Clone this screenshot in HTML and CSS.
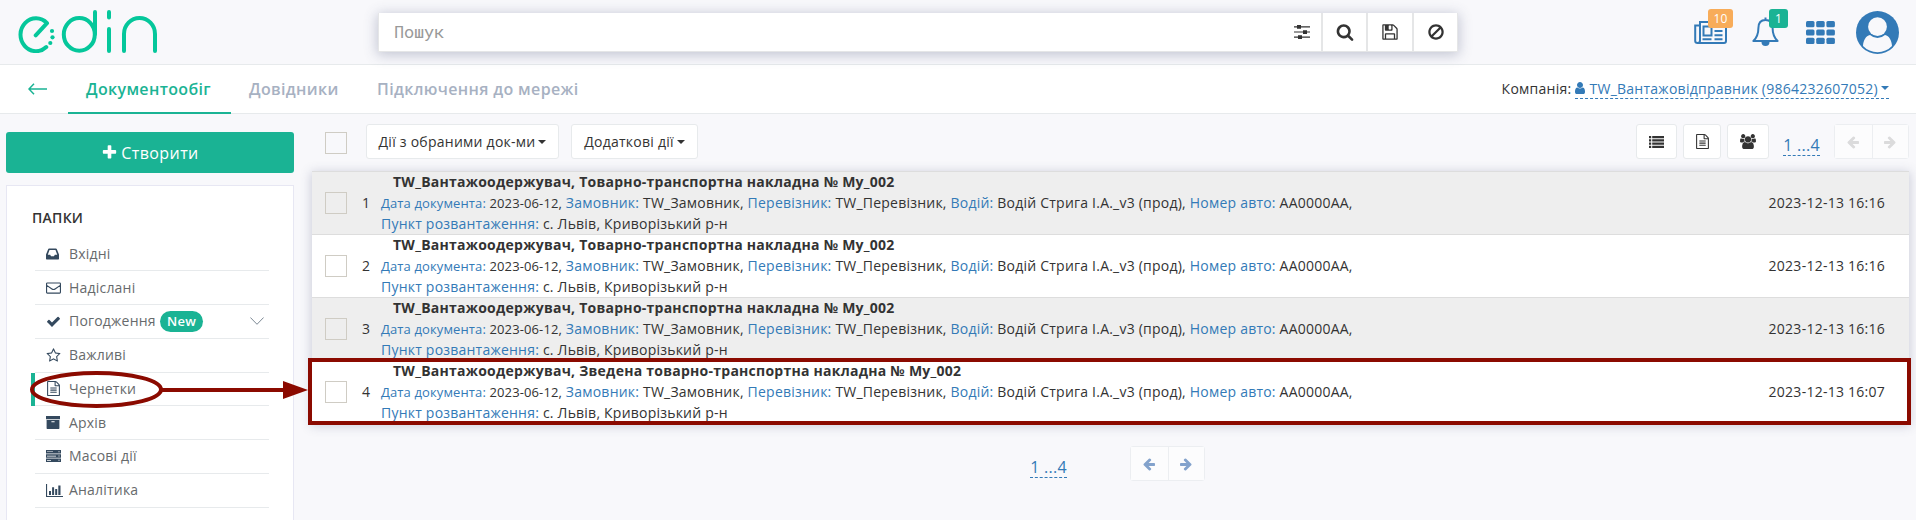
FILE: index.html
```html
<!DOCTYPE html>
<html lang="uk">
<head>
<meta charset="utf-8">
<title>edin</title>
<link rel="stylesheet" href="styles.css">
</head>
<body>
<svg class="sprite" aria-hidden="true">
  <symbol id="search" viewBox="0 0 1792 1792"><path d="M1216 832q0-185-131.500-316.500t-316.500-131.500-316.500 131.500-131.500 316.500 131.500 316.500 316.500 131.500 316.500-131.500 131.500-316.500zm512 832q0 52-38 90t-90 38q-54 0-90-38l-343-342q-179 124-399 124-143 0-273.500-55.500t-225-150-150-225-55.500-273.500 55.500-273.500 150-225 225-150 273.500-55.500 273.500 55.500 225 150 150 225 55.500 273.500q0 220-124 399l343 343q37 37 37 90z"/></symbol>
  <symbol id="ban" viewBox="0 0 1792 1792"><path d="M1440 893q0-161-87-295l-754 753q137 89 297 89 111 0 211.500-43.500t173.500-116.500 116-174.500 43-212.500zm-999 299l755-754q-135-91-300-91-148 0-273 73t-198 199-73 274q0 162 89 299zm1223-299q0 157-61 300t-163.500 246-245 164-298.500 61-298.500-61-245-164-163.500-246-61-300 61-299.500 163.500-245.500 245-164 298.500-61 298.500 61 245 164 163.500 245.500 61 299.500z"/></symbol>
  <symbol id="floppy" viewBox="0 0 1792 1792"><path d="M512 1536h768v-384h-768v384zm896 0h128v-896q0-14-10-38.500t-20-34.500l-281-281q-10-10-34-20t-39-10v416q0 40-28 68t-68 28h-576q-40 0-68-28t-28-68v-416h-128v1280h128v-416q0-40 28-68t68-28h832q40 0 68 28t28 68v416zm-384-928v-320q0-13-9.500-22.500t-22.500-9.500h-192q-13 0-22.500 9.500t-9.500 22.500v320q0 13 9.500 22.500t22.500 9.500h192q13 0 22.500-9.500t9.500-22.500zm640 32v928q0 40-28 68t-68 28h-1344q-40 0-68-28t-28-68v-1344q0-40 28-68t68-28h928q40 0 88 20t76 48l280 280q28 28 48 76t20 88z"/></symbol>
  <symbol id="user" viewBox="0 0 1792 1792"><path d="M1536 1399q0 109-62.500 187t-150.500 78h-854q-88 0-150.500-78t-62.500-187q0-85 8.500-160.500t31.500-152 58.500-131 94-89 134.500-34.500q131 128 313 128t313-128q76 0 134.500 34.500t94 89 58.500 131 31.500 152 8.500 160.500zm-256-887q0 159-112.500 271.500t-271.500 112.500-271.500-112.500-112.500-271.500 112.500-271.500 271.500-112.500 271.500 112.500 112.500 271.500z"/></symbol>
  <symbol id="plus" viewBox="0 0 1792 1792"><path d="M1600 736v192q0 40-28 68t-68 28h-416v416q0 40-28 68t-68 28h-192q-40 0-68-28t-28-68v-416h-416q-40 0-68-28t-28-68v-192q0-40 28-68t68-28h416v-416q0-40 28-68t68-28h192q40 0 68 28t28 68v416h416q40 0 68 28t28 68z"/></symbol>
  <symbol id="arrow" viewBox="0 0 1792 1792"><path d="M1664 896v128q0 53-32.500 90.500t-84.500 37.500h-704l293 294q38 36 38 90t-38 90l-75 76q-37 37-90 37-52 0-91-37l-651-652q-37-37-37-90 0-52 37-91l651-650q38-38 91-38 52 0 90 38l75 74q38 38 38 91t-38 91l-293 293h704q52 0 84.500 37.500t32.500 90.500z"/></symbol>
  <symbol id="star" viewBox="0 0 1792 1792"><path d="M1201 1004l306-297-422-62-189-382-189 382-422 62 306 297-73 421 378-199 377 199zm527-357q0 22-26 48l-363 354 86 500q1 7 1 20 0 50-41 50-19 0-40-12l-449-236-449 236q-22 12-40 12-21 0-31.500-14.500t-10.500-35.500q0-6 2-20l86-500-364-354q-25-27-25-48 0-37 56-46l502-73 225-455q19-41 49-41t49 41l225 455 502 73q56 9 56 46z"/></symbol>
  <symbol id="check" viewBox="0 0 1792 1792"><path d="M1671 566q0 40-28 68l-724 724-136 136q-28 28-68 28t-68-28l-136-136-362-362q-28-28-28-68t28-68l136-136q28-28 68-28t68 28l294 295 656-657q28-28 68-28t68 28l136 136q28 28 28 68z"/></symbol>
  <symbol id="file" viewBox="0 0 1792 1792"><path d="M1596 380q28 28 48 76t20 88v1152q0 40-28 68t-68 28h-1344q-40 0-68-28t-28-68v-1600q0-40 28-68t68-28h896q40 0 88 20t76 48zm-444-244v376h376q-10-29-22-41l-313-313q-12-12-41-22zm384 1528v-1024h-416q-40 0-68-28t-28-68v-416h-768v1536h1280zm-1024-864q0-14 9-23t23-9h704q14 0 23 9t9 23v64q0 14-9 23t-23 9h-704q-14 0-23-9t-9-23v-64zm736 224q14 0 23 9t9 23v64q0 14-9 23t-23 9h-704q-14 0-23-9t-9-23v-64q0-14 9-23t23-9h704zm0 256q14 0 23 9t9 23v64q0 14-9 23t-23 9h-704q-14 0-23-9t-9-23v-64q0-14 9-23t23-9h704z"/></symbol>
  <symbol id="sliders" viewBox="0 0 16 14"><path d="M0 1.200h16v1.200H0zM0 6.400h16v1.200H0zM0 11.600h16v1.200H0zM3 0h4v3.700H3zM9 5.200h4V9H9zM4 10.300h4V14H4z"/></symbol>
  <symbol id="inbox" viewBox="0 0 14 12"><path fill-rule="evenodd" d="M3.200 0h7.600q.5 0 .8.500L14 6.500v4.700q0 .8-.7.800H.7q-.7 0-.7-.8V6.500L2.400.5q.3-.5.800-.5zM3.800 1.800L1.900 6.700h2.600l.9 1.800h3.200l.9-1.800h2.600l-1.900-4.900z"/></symbol>
  <symbol id="envelope" viewBox="0 0 16 12"><path d="M.6 1.400q0-.8.800-.8h13.200q.8 0 .8.800v9.200q0 .8-.8.800H1.400q-.8 0-.8-.8zM.8 3.200L6.300 7q1.700 1.300 3.400 0l5.500-3.800" fill="none" stroke="currentColor" stroke-width="1.200"/></symbol>
  <symbol id="archive" viewBox="0 0 14 13"><path fill-rule="evenodd" d="M0 0h14v3.200H0zM.6 4h12.800v8.300q0 .7-.6.700H1.200q-.6 0-.6-.7zM5.400 5.200v1.100h3.200V5.200z"/></symbol>
  <symbol id="server" viewBox="0 0 15 12"><path fill-rule="evenodd" d="M0 0h15v3.400H0zM0 4.300h15v3.400H0zM0 8.600h15V12H0zM1 1.400v.7h6v-.7zM1 5.700v.7h9v-.7zM1 10v.7h4V10zM12.500 1.200v1h1v-1zM12.500 5.500v1h1v-1zM12.500 9.800v1h1v-1z"/></symbol>
  <symbol id="chart" viewBox="0 0 17 13"><path d="M0 0h1.100v11.900H17V13H0zM3 7h2v4H3zM6.100 3.200h2V11h-2zM9.200 5h2v6h-2zM12.300 1.500h2.200V11h-2.200z"/></symbol>
  <symbol id="list" viewBox="0 0 15 12"><path d="M0 0h2.200v2.200H0zM3.200 0H15v2.200H3.200zM0 3.250h2.200v2.200H0zM3.200 3.250H15v2.200H3.200zM0 6.500h2.200v2.200H0zM3.200 6.500H15v2.200H3.200zM0 9.750h2.200V12H0zM3.200 9.750H15V12H3.200z"/></symbol>
  <symbol id="users" viewBox="0 0 1920 1792"><path d="M593 896q-162 5-265 128h-134q-82 0-138-40.500t-56-118.500q0-353 124-353 6 0 43.500 21t97.500 42.500 119 21.500q67 0 133-23-5 37-5 66 0 159 81 256zm1071 637q0 120-73 189.500t-194 69.500h-874q-121 0-194-69.500t-73-189.500q0-53 3.500-103.500t14-109 26.500-108.500 43-97.500 62-81 85.500-53.500 111.500-20q10 0 43 21.500t73 48 107 48 135 21.500 135-21.500 107-48 73-48 43-21.500q61 0 111.500 20t85.500 53.500 62 81 43 97.500 26.500 108.500 14 109 3.500 103.500zm-1024-1277q0 106-75 181t-181 75-181-75-75-181 75-181 181-75 181 75 75 181zm704 384q0 159-112.500 271.500t-271.500 112.500-271.500-112.500-112.500-271.500 112.500-271.500 271.500-112.500 271.500 112.500 112.500 271.500zm576 225q0 78-56 118.500t-138 40.500h-134q-103-123-265-128 81-97 81-256 0-29-5-66 66 23 133 23 59 0 119-21.500t97.500-42.500 43.500-21q124 0 124 353zm-128-609q0 106-75 181t-181 75-181-75-75-181 75-181 181-75 181 75 75 181z"/></symbol>
</svg>

<header class="top">
  <svg class="logo" viewBox="0 0 140 43" fill="none" stroke="#05c79b" stroke-width="4" stroke-linecap="round" stroke-linejoin="round">
    <path d="M17.700 25.300L29 13.200A15.500 16.400 0 1 0 28.300 37"/>
    <g fill="#05c79b" stroke="none"><circle cx="34" cy="21" r="2.100"/><circle cx="34.500" cy="27.300" r="2.100"/><circle cx="32.300" cy="33" r="2.100"/></g>
    <ellipse cx="61.300" cy="24.400" rx="15.500" ry="16.400"/>
    <path d="M77 2v22M91 2v5.500M91 19v22M106 41V24a15.500 16 0 0 1 31 0v17"/>
  </svg>
  <div class="search">
    <div class="field"><span>Пошук</span><svg class="i-sliders"><use href="#sliders"/></svg></div>
    <button><svg class="i18"><use href="#search"/></svg></button>
    <button><svg class="i18"><use href="#floppy"/></svg></button>
    <button><svg class="i18"><use href="#ban"/></svg></button>
  </div>
  <div class="apps">
    <div class="app news">
      <svg width="33" height="23" viewBox="0 0 33 23" fill="none" stroke="currentColor" stroke-width="2"><path d="M5 4.500H1.200V20q0 2 2.400 2H30q2 0 2-2V1H6v18.500q0 2.500-2.400 2.500M9.500 5.500h8v9h-8zM20.500 10h8M20.500 14.300h8M8.500 18.300h9M20.500 18.300h8"/></svg>
      <span class="badge orange">10</span>
    </div>
    <div class="app bell">
      <svg width="27" height="30" viewBox="0 0 27 30"><path fill="none" stroke="currentColor" stroke-width="2" stroke-linejoin="round" d="M13.500 3C8 3 6.400 7 6.400 11c0 7-2.400 10.500-5 13h24.200c-2.600-2.500-5-6-5-13 0-4-1.600-8-7.100-8zM13.500 3V.5"/><path fill="currentColor" d="M9.500 25h8a4 4 0 0 1-8 0z"/></svg>
      <span class="badge green">1</span>
    </div>
    <svg class="grid" width="29" height="23" viewBox="0 0 29 23"><rect width="8.500" height="6.200" rx="1.500"/><rect x="10.200" width="8.500" height="6.200" rx="1.500"/><rect x="20.400" width="8.500" height="6.200" rx="1.500"/><rect y="8.400" width="8.500" height="6.200" rx="1.500"/><rect x="10.200" y="8.400" width="8.500" height="6.200" rx="1.500"/><rect x="20.400" y="8.400" width="8.500" height="6.200" rx="1.500"/><rect y="16.800" width="8.500" height="6.200" rx="1.500"/><rect x="10.200" y="16.800" width="8.500" height="6.200" rx="1.500"/><rect x="20.400" y="16.800" width="8.500" height="6.200" rx="1.500"/></svg>
    <svg class="avatar" width="43" height="43" viewBox="0 0 43 43"><circle cx="21.500" cy="21.500" r="21.500" fill="#337ab7"/><path fill="#f8f8fb" d="M7 35c.4-6 2.800-10 7-11a11 11 0 0 0 15 0c4.200 1 6.600 5 7 11a20 20 0 0 1-29 0z"/><circle cx="21.500" cy="15.700" r="9.400" fill="#f8f8fb"/></svg>
  </div>
</header>

<nav class="nav">
  <svg class="back" width="19" height="12" viewBox="0 0 19 12" fill="none" stroke="#1ab394" stroke-width="1.500"><path d="M6 .8L1 6l5 5.200M1 6h18"/></svg>
  <a class="tab active">Документообіг</a>
  <a class="tab t2">Довідники</a>
  <a class="tab t3">Підключення до мережі</a>
  <div class="company"><span class="label">Компанія:</span><span class="who"><svg class="i-user"><use href="#user"/></svg><span>TW_Вантажовідправник (9864232607052)</span><i class="caret"></i></span></div>
</nav>

<main class="page">
  <aside class="side">
    <button class="create"><svg class="i-plus"><use href="#plus"/></svg><span>Створити</span></button>
    <div class="panel">
      <h5>ПАПКИ</h5>
      <ul>
        <li><svg width="13" height="12"><use href="#inbox"/></svg><span>Вхідні</span></li>
        <li><svg width="15" height="12"><use href="#envelope"/></svg><span>Надіслані</span></li>
        <li><svg width="15" height="15"><use href="#check"/></svg><span>Погодження</span><b class="new">New</b><svg class="chev" viewBox="0 0 14 8"><path d="M.4.500L7 7.300 13.600.500" fill="none" stroke="#7a8793" stroke-width="1"/></svg></li>
        <li><svg width="15" height="15"><use href="#star"/></svg><span>Важливі</span></li>
        <li class="current"><svg width="15" height="15"><use href="#file"/></svg><span>Чернетки</span></li>
        <li><svg width="14" height="13"><use href="#archive"/></svg><span>Архів</span></li>
        <li><svg width="15" height="12"><use href="#server"/></svg><span>Масові дії</span></li>
        <li><svg width="17" height="13"><use href="#chart"/></svg><span>Аналітика</span></li>
      </ul>
    </div>
  </aside>

  <section class="content">
    <div class="tools">
      <span class="box"></span>
      <button class="btn b1"><span>Дії з обраними док-ми</span><i class="caret"></i></button>
      <button class="btn b2"><span>Додаткові дії</span><i class="caret"></i></button>
      <button class="btn b3"><svg width="15" height="12"><use href="#list"/></svg></button>
      <button class="btn b4"><svg width="15" height="15"><use href="#file"/></svg></button>
      <button class="btn b5"><svg width="16" height="15"><use href="#users"/></svg></button>
      <span class="range">1 ...4</span>
      <div class="pager off"><button><svg><use href="#arrow"/></svg></button><button><svg class="flip"><use href="#arrow"/></svg></button></div>
    </div>

    <div class="table">
      <div class="row odd"><span class="box"></span><span class="num">1</span>
        <div class="text"><b>TW_Вантажоодержувач, Товарно-транспортна накладна № My_002</b>
          <p><small><em>Дата документа:</em> 2023-06-12,</small> <em>Замовник:</em> TW_Замовник, <em>Перевізник:</em> TW_Перевізник, <em>Водій:</em> Водій Стрига І.А._v3 (прод), <em>Номер авто:</em> АА0000АА,</p>
          <p><em>Пункт розвантаження:</em> с. Львів, Криворізький р-н</p></div>
        <time>2023-12-13 16:16</time></div>
      <div class="row"><span class="box"></span><span class="num">2</span>
        <div class="text"><b>TW_Вантажоодержувач, Товарно-транспортна накладна № My_002</b>
          <p><small><em>Дата документа:</em> 2023-06-12,</small> <em>Замовник:</em> TW_Замовник, <em>Перевізник:</em> TW_Перевізник, <em>Водій:</em> Водій Стрига І.А._v3 (прод), <em>Номер авто:</em> АА0000АА,</p>
          <p><em>Пункт розвантаження:</em> с. Львів, Криворізький р-н</p></div>
        <time>2023-12-13 16:16</time></div>
      <div class="row odd"><span class="box"></span><span class="num">3</span>
        <div class="text"><b>TW_Вантажоодержувач, Товарно-транспортна накладна № My_002</b>
          <p><small><em>Дата документа:</em> 2023-06-12,</small> <em>Замовник:</em> TW_Замовник, <em>Перевізник:</em> TW_Перевізник, <em>Водій:</em> Водій Стрига І.А._v3 (прод), <em>Номер авто:</em> АА0000АА,</p>
          <p><em>Пункт розвантаження:</em> с. Львів, Криворізький р-н</p></div>
        <time>2023-12-13 16:16</time></div>
      <div class="row"><span class="box"></span><span class="num">4</span>
        <div class="text"><b>TW_Вантажоодержувач, Зведена товарно-транспортна накладна № My_002</b>
          <p><small><em>Дата документа:</em> 2023-06-12,</small> <em>Замовник:</em> TW_Замовник, <em>Перевізник:</em> TW_Перевізник, <em>Водій:</em> Водій Стрига І.А._v3 (прод), <em>Номер авто:</em> АА0000АА,</p>
          <p><em>Пункт розвантаження:</em> с. Львів, Криворізький р-н</p></div>
        <time>2023-12-13 16:07</time></div>
    </div>

    <div class="foot">
      <span class="range">1 ...4</span>
      <div class="pager"><button><svg><use href="#arrow"/></svg></button><button><svg class="flip"><use href="#arrow"/></svg></button></div>
    </div>
  </section>
</main>

<svg class="marks" width="1916" height="520" viewBox="0 0 1916 520">
  <g fill="none" stroke="#8b0a00" stroke-width="4"><rect x="310" y="360" width="1599" height="63"/><ellipse cx="96.500" cy="389.500" rx="64.500" ry="16.500"/><path d="M162 390h123"/></g>
  <path d="M283 381l25 9-25 9z" fill="#8b0a00"/>
</svg>
</body>
</html>
```
FILE: styles.css
```css
* { box-sizing: border-box; }
body {
  margin: 0;
  width: 1916px;
  height: 520px;
  overflow: hidden;
  position: relative;
  background: #f8f8fb;
  font-family: "Open Sans", "Noto Sans", sans-serif;
  font-size: 14px;
  line-height: 20px;
  letter-spacing: .25px;
  color: #333;
  white-space: nowrap;
}
button { font: inherit; letter-spacing: inherit; color: inherit; padding: 0; margin: 0; border: 0; background: #fff; display: flex; align-items: center; justify-content: center; }
svg { display: block; flex: none; }
svg:not([fill]) { fill: currentColor; }
.sprite { position: absolute; width: 0; height: 0; }
.marks { position: absolute; left: 0; top: 0; pointer-events: none; }

.top { height: 65px; border-bottom: 1px solid #e7eaec; display: flex; align-items: flex-start; }
.logo { width: 140px; height: 43px; margin: 10px 0 0 18px; }
.search { display: flex; width: 1080px; height: 39px; margin: 13px 0 0 220px; border: 1px solid #e5e6e7; border-top: 0; box-shadow: 0 2px 12px 1px rgba(70, 80, 120, .3); }
.field { width: 943px; background: #fff; display: flex; align-items: center; justify-content: space-between; padding: 0 11px 0 15px; font: 17px/24px "Roboto Mono", "Noto Sans Mono", "DejaVu Sans Mono", monospace; letter-spacing: -.2px; color: #999; }
.search button { width: 45.500px; border-left: 2px solid #e5e6e7; padding-left: 1px; }
.i18 { width: 18px; height: 18px; }
.i-sliders { width: 16px; height: 14px; color: #333; }
.apps { display: flex; color: #337ab7; }
.app { position: relative; }
.news { margin: 21px 0 0 236px; }
.bell { margin: 17px 0 0 25px; }
.grid { margin: 21px 0 0 27px; }
.avatar { margin: 11px 0 0 21px; }
.badge { position: absolute; height: 19px; border-radius: 3px; color: #fff; font-size: 12px; line-height: 19px; text-align: center; }
.orange { left: 14px; top: -12px; width: 25px; background: #f8ac59; }
.green { left: 17px; top: -8px; width: 19px; background: #1ab394; }

.nav { height: 49px; background: #fff; border-bottom: 1px solid #e7eaec; display: flex; align-items: flex-start; font-size: 16px; letter-spacing: .35px; }
.back { margin: 18px 21px 0 28px; }
.tab { height: 49px; padding: 0 0 0 18px; line-height: 48px; font-weight: 600; color: #a7b1c2; }
.active { width: 163px; color: #1ab394; border-bottom: 2px solid #1ab394; }
.t2 { width: 128px; }
.company { display: flex; margin: 13px 27px 0 auto; font-size: 14px; line-height: 21px; letter-spacing: .26px; }
.who { display: flex; align-items: center; margin-left: 4px; height: 21px; color: #337ab7; border-bottom: 1px dashed #337ab7; }
.i-user { width: 14px; height: 14px; margin-left: -2px; margin-right: 2px; }
.caret { border: 4px solid transparent; border-top-color: currentColor; border-bottom: 0; margin-left: 3px; }

.page { display: flex; height: 406px; }
.side { width: 288px; margin: 18px 18px 0 6px; }
.create { width: 288px; height: 41px; border-radius: 3px; background: #1ab394; color: #fff; font-size: 16px; letter-spacing: .4px; gap: 3px; }
.i-plus { width: 17px; height: 17px; }
.panel { margin-top: 12px; height: 335px; background: #fff; border: 1px solid #e7e7f3; border-bottom: 0; padding: 22px 24px 0 25px; }
h5 { margin: 0 0 9.500px; font-size: 14px; line-height: 20px; font-weight: 600; }
ul { list-style: none; margin: 0 0 0 3px; padding: 0; width: 234px; color: #676a6c; letter-spacing: .2px; }
li { height: 33.750px; border-bottom: 1px solid #e7eaec; display: flex; align-items: center; position: relative; }
li > svg:first-child { color: #34495e; margin-left: 11px; }
li > span { position: absolute; left: 34px; }
.new { position: absolute; left: 125px; top: 6px; width: 43px; height: 21px; border-radius: 11px; background: #1ab394; color: #fff; font-size: 13px; line-height: 21px; text-align: center; font-weight: 600; }
.chev { position: absolute; right: 5px; top: 12px; width: 14px; height: 8px; }
.current::after { content: ""; position: absolute; left: -4px; top: 0; width: 4px; height: 33px; background: #1ab394; }

.content { width: 1597px; }
.tools { display: flex; height: 57px; padding-top: 10px; }
.box { width: 22px; height: 22px; border: 1px solid #cfccc4; flex: none; }
.tools .box { margin: 8px 19px 0 13px; }
.btn { height: 35px; border: 1px solid #e7eaec; border-radius: 3px; }
.b1 { width: 193px; margin-right: 12px; }
.b2 { width: 127px; margin-right: 938px; }
.b3 { width: 41px; margin-right: 6px; }
.b4 { width: 38px; margin-right: 6px; }
.b5 { width: 42px; margin-right: 14px; }
.range { width: 37px; height: 22px; margin-top: 10px; font-size: 16px; line-height: 22px; color: #337ab7; border-bottom: 1px dashed #337ab7; text-align: center; }
.pager { display: flex; margin-left: 14px; width: 75px; height: 35px; border: 1px solid #e7eaec; border-radius: 3px; opacity: .65; color: #4575b4; }
.pager button { width: 36.500px; }
.pager button + button { border-left: 1px solid #e7eaec; }
.pager svg { width: 14px; height: 14px; }
.off { color: #ccc; }
.flip { transform: scaleX(-1); }

.table { box-shadow: 0 2px 10px 1px rgba(70, 80, 120, .25); }
.row { height: 63px; border-top: 1px solid #ddd; background: #fff; display: flex; align-items: center; padding: 0 24px 0 13px; }
.odd { background: #eee; }
.row .box { margin-top: -1px; }
.num { width: 34px; padding-left: 15px; }
.text { align-self: stretch; flex: 1; line-height: 21px; }
.text b { display: block; padding-left: 12px; line-height: 20px; }
.text p { margin: 0; letter-spacing: .22px; }
.text p + p { margin-top: -1px; }
.text small { font-size: 13px; letter-spacing: .12px; }
.text em { font-style: normal; color: #337ab7; }
.foot { display: flex; margin-top: 23px; padding-left: 718px; }
.foot .pager { margin-left: 63px; }
```
